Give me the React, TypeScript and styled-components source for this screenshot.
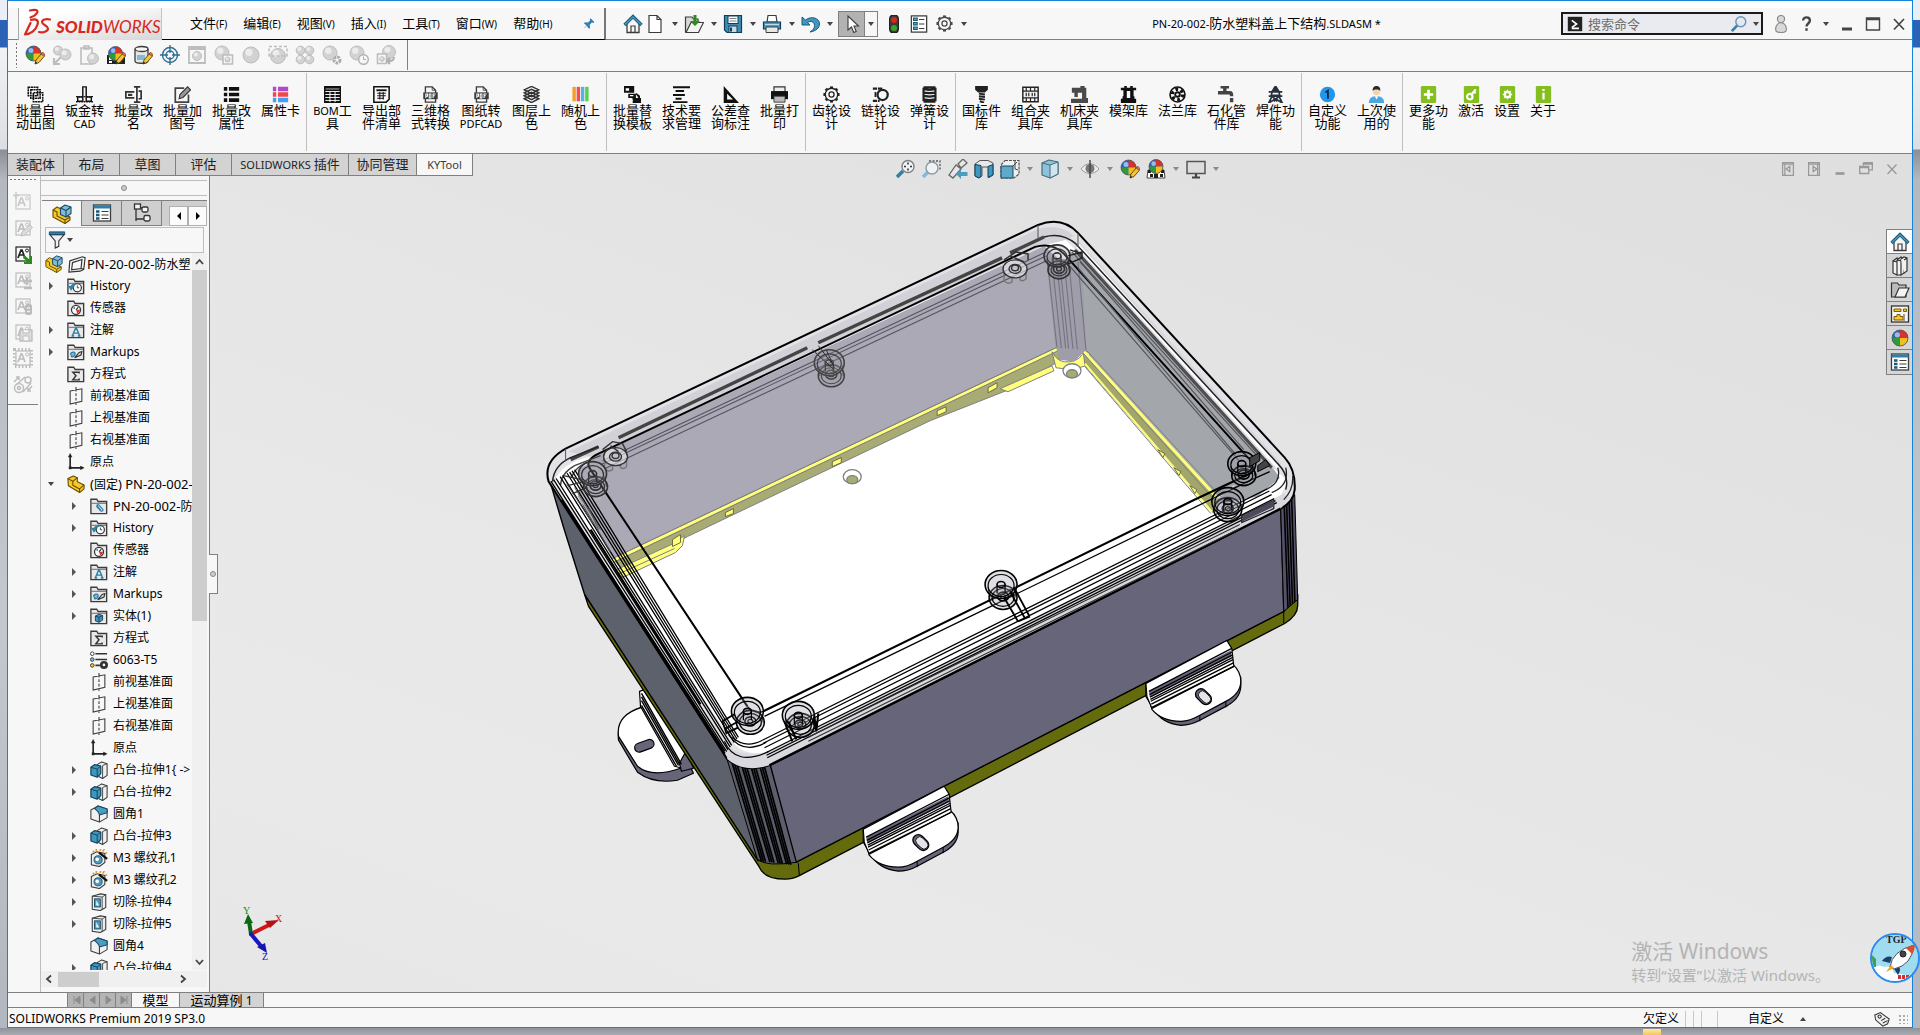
import React, { ReactNode } from 'react';
import styled, { createGlobalStyle } from 'styled-components';

const SANS = '"Noto Sans", "Noto Sans CJK SC", sans-serif';
const GRAY = '#808080';
const PANEL = '#f7f7f7';

const GlobalStyle = createGlobalStyle`
  * { box-sizing: border-box; }
  body { margin: 0; overflow: hidden; }
  button, input { font: inherit; color: inherit; }
  ul { list-style: none; margin: 0; padding: 0; }
`;

/* ---------- shell ---------- */

const Desktop = styled.div`
  height: 100vh;
  padding: 0 7px 7px;
  font-family: ${SANS};
  font-size: 12px;
  line-height: 16px;
  color: #000;
  background:
    linear-gradient(#ffe9a0, #f0c860) 1643px 100% / 18px 6px no-repeat,
    linear-gradient(#8f9299, #a9acb2) 0 100% / 100% 7px no-repeat,
    linear-gradient(#e9eef8 0, #e9eef8 20px, #2b62b5 20px, #2b62b5 47px, #f1f2f4 48px, #dcdee3 149px, #8b8e95 150px, #b4b8c0 180px, #c3c7ce 60%, #b2b6be 100%);
`;
const AppWindow = styled.div`
  height: 100%;
  display: flex;
  flex-direction: column;
  border: 1px solid #1583d8;
  background: #fff;
  padding-top: 7px;
`;

const PlainButton = styled.button`
  border: 0;
  padding: 0;
  margin: 0;
  background: none;
  display: flex;
  align-items: center;
  justify-content: center;
`;
const IconButton = styled(PlainButton)<{ $w?: number; $h?: number }>`
  width: ${p => p.$w ?? 20}px;
  height: ${p => p.$h ?? 20}px;
  flex: none;
`;
const Caret = styled.i<{ $c?: string; $up?: boolean }>`
  border: 3px solid transparent;
  border-${p => (p.$up ? 'bottom' : 'top')}: 4px solid ${p => p.$c ?? '#444'};
  border-${p => (p.$up ? 'top' : 'bottom')}-width: 0;
`;
const Latin = styled.span<{ $s: number }>`
  font-size: ${p => p.$s}px;
`;
function Mixed({ text, size = 11 }: { text: string; size?: number }) {
  return (
    <>
      {text.split(/([\x20-\x7e]+)/).map((t, i) =>
        i % 2 ? <Latin key={i} $s={size}>{t}</Latin> : t
      )}
    </>
  );
}

/* ---------- icons ---------- */

const K = '#3c3c3c';
const B = '#2f7fa6';
const LB = '#7fbcd8';
const LG = '#bdbdbd';

const ball = (cx: number, cy: number, r: number) => (
  <g>
    <circle cx={cx} cy={cy} r={r} fill="#2864c8" />
    <path d={`M${cx} ${cy}V${cy - r}A${r} ${r} 0 0 1 ${cx + r} ${cy}Z`} fill="#d8322c" />
    <path d={`M${cx} ${cy}H${cx - r}A${r} ${r} 0 0 0 ${cx} ${cy + r}Z`} fill="#2e9a3a" />
    <path d={`M${cx} ${cy}V${cy + r}A${r} ${r} 0 0 0 ${cx + r} ${cy}Z`} fill="#f0c020" />
    <circle cx={cx - r / 3} cy={cy - r / 2.5} r={r / 3} fill="#fff" opacity=".55" />
    <circle cx={cx} cy={cy} r={r} fill="none" stroke="#555" strokeWidth=".8" />
  </g>
);
const gball = (cx: number, cy: number, r: number) => (
  <g>
    <circle cx={cx} cy={cy} r={r} fill="#d2d2d2" stroke={LG} />
    <circle cx={cx - r / 4} cy={cy - r / 3} r={r / 2.2} fill="#ececec" />
  </g>
);
const pencil = (
  <g>
    <path d="M10 19l1-4 6-7 3 2.500-6 7z" fill="#f3c63a" stroke="#5a3d10" strokeWidth=".9" />
    <path d="M16 9l1.500-2 2.500 2.500-1.500 1.500z" fill="#e06a5a" stroke="#5a3d10" strokeWidth=".6" />
    <path d="M10 19l.6-2.400 1.600 1.400z" fill="#222" />
  </g>
);
const folder = (
  <path d="M1 18.500v-16h6.500l1.500 2.500h9.500v13.500z" fill="#e9e9e9" stroke={K} strokeWidth="1.500" />
);
const folderFace = <path d="M2 7h16" stroke={K} strokeWidth=".8" />;
const noteBox = (c: string) => (
  <g>
    <rect x="3" y="3" width="14" height="14" fill="none" stroke={c} strokeWidth="1.200" />
    <path d="M5 14l3-8h1l3 8M6 11h5" fill="none" stroke={c} strokeWidth="1.700" />
    <circle cx="14" cy="6.500" r="1.500" fill="none" stroke={c} />
  </g>
);
const green = (c: ReactNode) => (
  <g>
    <rect x="1" y="0" width="18" height="20" rx="1.500" fill="#84bf1f" />
    {c}
  </g>
);
const gearTeeth = (cx: number, cy: number, r: number, n: number, c: string, w: number) => (
  <g stroke={c} strokeWidth={w}>
    {Array.from({ length: n }, (_, i) => {
      const a = (i * 2 * Math.PI) / n;
      return (
        <path key={i} d={`M${cx + Math.cos(a) * (r - 1)} ${cy + Math.sin(a) * (r - 1)}L${cx + Math.cos(a) * (r + 1.5)} ${cy + Math.sin(a) * (r + 1.5)}`} />
      );
    })}
  </g>
);
const gear = (c: string) => (
  <g fill="none" stroke={c}>
    {gearTeeth(10, 10, 8, 8, c, 3.6)}
    <circle cx="10" cy="10" r="7.300" fill={PANEL} strokeWidth="1.600" />
    <circle cx="10" cy="10" r="3" strokeWidth="1.500" />
  </g>
);
const house = (
  <g>
    <path d="M4 9v9.500h12V9l-6-6z" fill="#f6f6f6" stroke={K} strokeWidth="1.300" />
    <path d="M8 18v-6h4v6" fill="none" stroke={K} strokeWidth="1.200" />
    <path d="M1.500 11L10 2.500l8.500 8.500" fill="none" stroke="#1c5a7a" strokeWidth="3.200" />
    <path d="M2 10.500L10 2.800l8 7.700" fill="none" stroke="#4a9cc0" strokeWidth="1.300" />
  </g>
);
const assembly = (
  <g strokeLinejoin="round" strokeWidth="1.100">
    <path d="M1 6l4-3 4 2v4l9 4v3l-5 3.500L1 13z" fill="#f5c928" stroke="#6a4c00" />
    <path d="M1 6l4 2v4l8 4v3.500M13 16l5-3" fill="none" stroke="#6a4c00" />
    <path d="M8.500 4l4.500-3 6 2v6.500L14 13l-5.500-2.500z" fill={LB} stroke="#1c4a64" />
    <path d="M8.500 4L14 6.500V13M14 6.500L19 3" fill="none" stroke="#1c4a64" />
  </g>
);
const part = (
  <g strokeLinejoin="round" stroke="#6a4c00" strokeWidth="1.200">
    <path d="M1 4l6-3 4.500 2v4.500L19 11v4.500L14 19.500 1.500 12z" fill="#f5c928" />
    <path d="M1 4l5.500 3v4.500l7.500 4v4M6.500 7l5-4M14 15.500l5-4.500" fill="none" />
  </g>
);
const props = (
  <g>
    <rect x="1.500" y="2" width="17" height="16" fill="#fff" stroke={K} strokeWidth="1.300" />
    <path d="M1.500 4h17" stroke={B} strokeWidth="3" />
    <path d="M4 8.500h3.500M4 12h3.500M4 15.500h3.500" stroke="#1c5a7a" strokeWidth="2.400" />
    <path d="M9.500 8.500h7M9.500 12h7M9.500 15.500h7" stroke={K} strokeWidth="1.200" />
  </g>
);
const pdf = (
  <g>
    <path d="M4 8V1h8l4 4v14H4v-4" fill="none" stroke={K} strokeWidth="1.600" />
    <path d="M12 1v4h4" fill="none" stroke={K} />
    <rect x="1.500" y="7.500" width="17" height="8" fill={K} />
    <path d="M4.500 14v-4.500h2V12h-2M8.500 9.500V14h2V9.500zM13 14V9.500h3M13 11.500h2" fill="none" stroke="#fff" strokeWidth="1.200" />
  </g>
);
const extrude = (
  <g strokeLinejoin="round">
    <path d="M8 4l5-3 6 2v13l-5 3.500-4-2z" fill="#f1f1f1" stroke={K} strokeWidth="1.200" />
    <path d="M14 5v14M14 5l5-2" stroke={K} fill="none" />
    <path d="M1 7l4-3 7 1.500V14l-4 4-7-2.500z" fill="#3f97bd" stroke="#123f58" strokeWidth="1.300" />
    <path d="M1 7l7 2v9M8 9l4-3.500" stroke="#123f58" fill="none" />
  </g>
);
const fillet = (
  <g strokeLinejoin="round" strokeWidth="1.200">
    <path d="M1 5.500L9 1l10 3.500V14l-8.500 5L1 15.500z" fill="#f1f1f1" stroke={K} />
    <path d="M9 1l10 3.500V8.500l-8.500 2.500C10 8 8 6 5 4z" fill="#4a9cc0" stroke="#1c4a64" />
    <path d="M10.500 11v8" stroke={K} />
  </g>
);
const cut = (
  <g>
    <path d="M2.500 3.500l9-2.500 6 1v14l-6 3.500-9-1.500z" fill="#eee" stroke={K} strokeWidth="1.200" />
    <path d="M2.500 3.500l11 1V18.500M13.500 4.500l4-2.500" fill="none" stroke={K} />
    <rect x="5" y="6.500" width="6.500" height="9" fill="#4a9cc0" stroke="#1c4a64" />
    <path d="M7 8v6h3z" fill="#fff" />
  </g>
);
const hole = (
  <g>
    <path d="M1.500 6l6-3 9 2v10l-6 4.500-9-2z" fill="#eee" stroke={K} strokeWidth="1.200" />
    <circle cx="9" cy="12" r="4.500" fill="#4a9cc0" stroke="#1c4a64" />
    <circle cx="8" cy="11.500" r="2" fill="#fff" />
    <path d="M10 4l9 7" stroke="#111" strokeWidth="2.600" />
    <path d="M3 2l2 2M7 0v3M12 0l-1 2M16 0l-2 3M19 4l-2 1" stroke="#e3962a" strokeWidth="1.700" />
  </g>
);
const plane = (
  <path d="M3.500 4.500L16.500 2v14L3.500 19zM10 0v5m0 2v3m0 2v3m0 2v3" fill="none" stroke={K} strokeWidth="1.200" />
);
const origin = (
  <g fill="none" stroke="#222" strokeWidth="1.800">
    <path d="M3.500 3v13.500H17" />
    <path d="M1.500 4.500l2-4 2 4zM15 14.500l4 2-4 2z" fill="#222" strokeWidth=".5" />
    <rect x="2" y="15" width="3" height="3" fill="#222" stroke="none" />
  </g>
);

const ICONS: Record<string, ReactNode> = {
  house,
  assembly,
  part,
  props,
  pdf,
  extrude,
  fillet,
  cut,
  hole,
  plane,
  origin,
  gear: gear('#4a4a4a'),
  gearBlack: gear('#222'),
  pin: <path d="M3 17l5-5-4-3 2-1.500 4 .5 3-3-.5-2.500L14 2l5 5-1 1.500-2.500-.5-3 3 .5 4-1.500 2-3-4z" fill="#2f7fb5" />,
  fileNew: <path d="M4 1.500h8l4 4v13H4zM12 1.500v4h4" fill="#fff" stroke={K} strokeWidth="1.200" />,
  fileOpen: (
    <g>
      <path d="M1.500 3H8l1.500 2H14v13H1.500z" fill="#d8d8d8" stroke={K} strokeWidth="1.200" />
      <path d="M2 18.500l5-10h12.500l-5 10z" fill="#f4f4f4" stroke={K} strokeWidth="1.200" />
      <path d="M9.500 1h3v6h3.500L11 12 6 7h3.500z" fill="#2c8a1e" />
    </g>
  ),
  save: (
    <g>
      <path d="M1.500 1.500h17v17H4l-2.500-2.500z" fill="#3d8db3" stroke="#123f58" strokeWidth="1.200" />
      <rect x="5" y="2" width="10" height="7.500" fill="#fff" stroke="#123f58" />
      <path d="M6.500 4.500h7M6.500 7h7" stroke={GRAY} />
      <rect x="6" y="12" width="8" height="6.500" fill="#c9dbe4" stroke="#123f58" />
      <path d="M8 13.500v4" stroke="#123f58" strokeWidth="2" />
    </g>
  ),
  print: (
    <g>
      <path d="M5 8l1-6.500h8L15 8z" fill="#fff" stroke={K} strokeWidth="1.200" />
      <path d="M1.500 8h17v7h-17z" fill="#4a9cc0" stroke="#123f58" strokeWidth="1.200" />
      <path d="M4 13h12v5.500H4z" fill="#e8e8e8" stroke={K} />
      <path d="M3 10.500h14" stroke="#bde0ef" />
    </g>
  ),
  undo: <path d="M1 3v8h8L6.500 8.500c3-2 7-1 7 3 0 3-1.500 4.500-4.500 6.500 6-1 9.500-4 9.500-8 0-6-8-8.500-14-4z" fill="#3f97bd" stroke="#1c5a7a" />,
  cursor: <path d="M6 2v14l3.500-3 2.300 5.500 2.400-1L12 12h4.500z" fill="#fff" stroke={K} strokeWidth="1.100" />,
  traffic: (
    <g>
      <rect x="5" y="0" width="10" height="20" rx="4" fill="#3a3a3a" stroke="#111" />
      <circle cx="10" cy="5.500" r="3.300" fill="#d8281e" />
      <circle cx="10" cy="14.500" r="3.300" fill="#3aa32a" />
    </g>
  ),
  list: (
    <g>
      <rect x="1.500" y="1" width="17" height="18" fill="#fff" stroke={K} strokeWidth="1.400" />
      <path d="M4 3.500h4V6H4zM4 8.500h4V11H4zM4 13.500h4V16H4z" fill={LB} stroke="#1c5a7a" strokeWidth="1.300" />
      <path d="M10 5h6M10 10h6M10 15h6" stroke={K} strokeWidth="1.300" />
    </g>
  ),
  prompt: (
    <g>
      <rect x="1" y="1" width="18" height="18" fill="#222" />
      <path d="M6 5.500l6 4.500-6 4.500M6 15.500h9" fill="none" stroke="#fff" strokeWidth="2" />
    </g>
  ),
  search: (
    <g fill="none">
      <path d="M2 18l6-6.500" stroke="#3f7fa8" strokeWidth="3" />
      <circle cx="12" cy="7.500" r="5.500" fill="#dfeaf4" stroke="#6f93b4" strokeWidth="1.600" />
    </g>
  ),
  user: (
    <g fill="#d9d9d9" stroke="#8a8a8a" strokeWidth="1.300">
      <circle cx="10" cy="4.500" r="4" />
      <path d="M4.500 18c-1.500-5 1.500-9.500 5.500-9.500S17 13 15.500 18c-2 2-9 2-11 0z" />
    </g>
  ),
  help: <path d="M6 6.500C6 1.500 14 1.500 14 6.500c0 3.500-4 3.500-4 7M10 15.500v3" fill="none" stroke="#444" strokeWidth="2.800" />,
  min: <path d="M5 15h10" stroke="#444" strokeWidth="3" />,
  max: <path d="M3.500 4h13v12h-13zM3.500 5.500h13" fill="none" stroke="#444" strokeWidth="1.400" />,
  close: <path d="M5 5l10 10.500M15 5L5 15.500" stroke="#444" strokeWidth="1.700" />,
  /* render toolbar */
  ballPencil: <g>{ball(8.5, 8.5, 7.5)}{pencil}</g>,
  gCopy: <g>{gball(6, 5.500, 4.5)}{gball(13.5, 9.5, 5.5)}<path d="M2 19l7-7M2 13v6h6" fill="none" stroke={LG} strokeWidth="2.200" /></g>,
  gPaste: <g><path d="M2 3h11v16H2zM5 1h5v3H5z" fill="none" stroke={LG} strokeWidth="1.600" />{gball(14, 13.5, 5.5)}</g>,
  sceneEdit: (
    <g>
      <path d="M1 19v-9h18v9z" fill="#222" /><path d="M3 12h3v3H3zM3 16h3v2H3zM14 12h3v3h-3z" fill="#fff" />
      {ball(9.5, 8.5, 7)}{pencil}
    </g>
  ),
  dbEdit: (
    <g>
      <path d="M2 4v12c0 3 13 3 13 0V4" fill="#e6e6e6" stroke={K} strokeWidth="1.300" />
      <ellipse cx="8.500" cy="4" rx="6.500" ry="2.500" fill="#f6f6f6" stroke={K} strokeWidth="1.300" />
      <path d="M4 10h8v5H4z" fill={LB} />{pencil}
    </g>
  ),
  target: (
    <g fill="none" stroke="#2f6f92" strokeWidth="1.400">
      <circle cx="10" cy="10" r="7.500" /><circle cx="10" cy="10" r="4" /><path d="M10 0v8m0 4v8M0 10h8m4 0h8" />
    </g>
  ),
  gWin: <g><path d="M2 2h16v16H2zM2 4h16" fill="none" stroke={LG} strokeWidth="1.800" />{gball(10, 11, 4.5)}</g>,
  gBallWin: <g>{gball(8, 8, 7)}<path d="M9 10h9.500v9H9z" fill={PANEL} stroke={LG} strokeWidth="1.600" />{gball(13.5, 14.5, 2.5)}</g>,
  gBall: gball(10, 10, 8),
  gBallDash: <g>{gball(10, 11, 7.5)}<path d="M1 1.500h18V11H1z" fill="none" stroke={LG} strokeWidth="1.500" strokeDasharray="3 2" /></g>,
  gFour: <g>{gball(5.5, 5.5, 4.3)}{gball(14.5, 5.5, 4.3)}{gball(5.5, 14.5, 4.3)}{gball(14.5, 14.5, 4.3)}</g>,
  gGear: <g>{gball(8, 8, 7)}<circle cx="15" cy="15" r="3" fill="none" stroke="#aaa" strokeWidth="3" strokeDasharray="2.500 1" /></g>,
  gClock: <g>{gball(8, 8, 7)}<circle cx="14.500" cy="14.500" r="4.800" fill={PANEL} stroke="#b0b0b0" strokeWidth="1.400" /><path d="M14.500 11.500v3h2.500" fill="none" stroke="#b0b0b0" /></g>,
  gRecall: <g>{gball(13, 7, 6.5)}<path d="M1.500 9h9v9.500h-9z" fill={PANEL} stroke={LG} strokeWidth="1.600" />{gball(6, 14, 2.3)}<path d="M18 12c0 4-3 4-6 4M14 13l-3 3 3 3" stroke="#b0b0b0" strokeWidth="2" fill="none" /></g>,
  /* ribbon */
  copies: <g fill={PANEL} stroke="#111" strokeWidth="1.800" strokeDasharray="2.500 .6"><path d="M1.500 1.500h11v10h-11zM4.500 4.500h11v10h-11zM7.500 8h11v10.500h-11z" /></g>,
  sheet: <g fill="none" stroke="#111" strokeWidth="1.700"><path d="M8 12V1h4v11M2 18v-5h6v5zM12 13h6v5h-6z" /><path d="M0 12.500h20M0 18.500h20" strokeDasharray="2 1" /></g>,
  rename: <g fill="none" stroke="#333" strokeWidth="2"><path d="M11 7H1v7h10" /><path d="M3.500 10.500h5" strokeWidth="2.600" /><path d="M10.500 1h3l.5 1.500.5-1.500H18M10.500 19h3l.5-1.500.5 1.500H18M14 2v16M16 6h3v9h-3" /></g>,
  edit: <g fill="none" stroke="#444" strokeWidth="2"><path d="M12 2.500H1.500V19H17v-9" /><path d="M6 15l1-5 9-9 3.500 3.500-9 9z" fill="#999" stroke="#333" strokeWidth="1.300" /></g>,
  listBlack: <path d="M1 3.500h4M7 3.500h12M1 10h4M7 10h12M1 16.500h4M7 16.500h12" stroke="#111" strokeWidth="4.400" />,
  listColor: (
    <g strokeWidth="5.400">
      <path d="M1 3.500h4M7 3.500h12" stroke="#b04ac8" /><path d="M1 10h4M7 10h12" stroke="#f04848" /><path d="M1 16.500h4M7 16.500h12" stroke="#3fa0f4" />
    </g>
  ),
  bom: <g><path d="M0 0h20v20H0z" fill="#111" /><path d="M1.500 6.500h17M1.500 10h17M1.500 13.500h17M1.500 17h17M7 7v12M13 7v12" stroke="#fff" strokeWidth="1.100" /><path d="M2 3.500h16" stroke="#fff" strokeWidth=".8" /></g>,
  tableOut: <g fill="none" stroke="#111" strokeWidth="1.800"><path d="M1 1h18v14.500L15.500 19H1z" /><path d="M4 5h12" strokeWidth="2.200" /><path d="M5 8.500h10M5 11.500h10M5 14.500h8M8 7v9M12 7v9" strokeWidth="1.200" /></g>,
  layers: <g fill={PANEL} stroke="#333" strokeWidth="1.700"><path d="M1.500 15L10 11l8.500 4-8.500 4.500zM1.500 11.500L10 7.500l8.500 4L10 16zM1.500 8L10 4l8.500 4-8.500 4.500zM1.500 4.500L10 .5l8.500 4L10 9z" /></g>,
  crayons: (
    <g strokeWidth="4">
      <path d="M2.500 1v17" stroke="#f0a028" /><path d="M7.500 1v17" stroke="#f05048" /><path d="M12.500 1v17" stroke="#58b0e8" /><path d="M17.500 1v17" stroke="#58d048" />
    </g>
  ),
  replace: <g fill="#111"><path d="M0 0h12v8H0zM5 9h9v5H5z" /><path d="M2 2.500h4v3H2zM7 10.500h4V12H7z" fill="#fff" /><path d="M10 15h10v5h-9v-3M14 9l4 3v4" stroke="#111" strokeWidth="1.600" /></g>,
  lines: <path d="M0 1.500h20M3 6h10M0 10.500h14M3 15h7M0 19h17" stroke="#111" strokeWidth="2.300" />,
  triangle: <path d="M2 0v20h18zM6 9v7h7z" fill="#111" fillRule="evenodd" />,
  printer: <g><path d="M3.500 1h13v6h-13z" fill="#eee" stroke="#333" strokeWidth="1.400" /><path d="M0 6h20v9.500H0z" fill="#111" /><path d="M3.500 12h13v7h-13z" fill="#bbb" stroke="#333" /></g>,
  chain: <g fill="none" stroke="#222" strokeWidth="2.600"><path d="M1 3h12M1 17.500h8" strokeDasharray="5 1" /><circle cx="12.500" cy="10.500" r="6" /><path d="M4 7v6" strokeWidth="2" /></g>,
  spring: <g fill="none" stroke="#222" strokeWidth="2.600"><path d="M2 3c4 2 12 2 16 0M2 7c4 2 12 2 16 0M2 11c4 2 12 2 16 0M2 15c4 2 12 2 16 0M3 18.500h14M3 1.500h14M3 2v16M17 2v16" /></g>,
  bolt: <g fill="#222"><path d="M2.500 0h15v4.500l-3.500 3H6l-3.500-3z" /><path d="M7 9l7 1M7 12l7 1M7 15l7 1M8 18l5 1.500" stroke="#222" strokeWidth="2.300" /></g>,
  fixture: <g fill="none" stroke="#222" strokeWidth="1.700"><path d="M1 1.500h18v17H1z" /><path d="M1 6h18M1 14h18" /><path d="M5 2v4M10 2v4M15 2v4M5 14v4M10 14v4M15 14v4M5 8v4M8 8v4M12 8v4M15 8v4" strokeWidth="1.400" /></g>,
  machine: <path d="M1 2h10V0h5v2h2v12h2v6H0v-5h13V8H8v5H4V8H1z" fill="#4a4a4a" />,
  mold: <path d="M1 2h4V0h3v2h4V0h3v2h4v3h-3v7h1v3h2v5H1v-5h2v-3h1V5H1zM8 6v8h4V6z" fill="#111" fillRule="evenodd" />,
  flange: (
    <g fill="none" stroke="#111">
      <circle cx="10" cy="10" r="8.800" strokeWidth="1.900" /><circle cx="10" cy="10" r="2.700" strokeWidth="2.200" />
      <circle cx="10" cy="10" r="6" strokeWidth="4" strokeDasharray="3.200 3.080" />
    </g>
  ),
  tap: <path d="M3 0h10v3h-3v3h4c3 0 4 2 4 6h-4c0-2 0-2-2-2H0V6h6V3H3zM14 14h4v5h-4z" fill="#444" />,
  tower: <path d="M10 0L7 5h6l-3-5v5M2 7h16M4 7h2l-1 4h10l-1-4M2 12h16M6 12L2 20l8-5 8 5-4-8M6 12l6 6M14 12l-6 6" fill="none" stroke="#27303c" strokeWidth="2" />,
  one: <g><circle cx="10" cy="10" r="9" fill="#1f97ee" /><path d="M7.500 7.500L10.500 5.500V15" fill="none" stroke="#123" strokeWidth="2" /></g>,
  person: (
    <g>
      <path d="M1 20c0-7 5-8 9-8s9 1 9 8z" fill="#4aa8e0" /><path d="M8 12h4l-2 4z" fill="#fff" />
      <circle cx="10" cy="6.500" r="4.300" fill="#f6d3a8" /><path d="M5.500 5.500c-1-7.500 10-7.500 9 0-2-2-7-2-9 0z" fill="#2a2a2a" />
    </g>
  ),
  gPlus: green(<path d="M10 4.500v11M4.500 10h11" stroke="#fff" strokeWidth="3.200" />),
  gKey: green(<g fill="none" stroke="#fff" strokeWidth="2.600"><circle cx="8" cy="12.500" r="3.200" /><path d="M10 10l5-6M12.500 6.500l2.500 2" /></g>),
  gSet: green(<g>{gearTeeth(10, 10, 4, 8, '#fff', 2)}<circle cx="10" cy="10" r="3" fill="none" stroke="#fff" strokeWidth="2.400" /></g>),
  gInfo: green(<path d="M10 8v8M10 3.500v2.500" stroke="#fff" strokeWidth="2.600" />),
  /* view toolbar */
  zoomFit: <g><path d="M1 18l6-6" stroke={B} strokeWidth="3.500" /><circle cx="12" cy="7.500" r="6" fill="#eef3f6" stroke={GRAY} strokeWidth="1.400" /><path d="M12 3.500v2M12 9.500v2M8 7.500h2M14 7.500h2" stroke="#333" strokeWidth="1.600" /></g>,
  zoomArea: <g><path d="M7 2h11v10" fill="none" stroke="#555" strokeDasharray="2 1.500" strokeWidth="1.300" /><path d="M1 18l5-5" stroke={LB} strokeWidth="3.500" /><circle cx="10" cy="9" r="6" fill="#eef3f6" stroke="#8a9aa5" strokeWidth="1.400" /></g>,
  prevView: <g><path d="M1 16l7-10 5 4-8 9zM10 5l5-5 4 4-6 5z" fill="#e8e8e8" stroke="#666" strokeWidth="1.300" /><path d="M8 15l5-5v3h6.500v4H13v3z" fill="#4a9cc0" /></g>,
  section: <g><path d="M1 5l5-3.500h8l5 2.500v12l-4 2.500V8H8v9l-3 2-4-2z" fill="#e8e8e8" stroke="#555" /><path d="M1 5.500l6 1V17l-2 2-4-2zM14 7.500l5-2V16l-5 2.500z" fill="#3f97bd" stroke="#123f58" /></g>,
  cubeView: <g><path d="M5 1.500h14V15l-5 4H1V6z" fill="#f0f0f0" stroke="#555" strokeWidth="1.200" strokeDasharray="3 1" /><path d="M1 7h12v12H1z" fill="#5fa9ca" stroke="#1c4a64" /><path d="M13 7l4-4M15 2v8l3 1" fill="none" stroke="#444" /></g>,
  cube: <g strokeLinejoin="round"><path d="M2 4l7-3 9 2v12l-8 4-8-3z" fill="#8cc3dc" stroke="#4a6a7a" strokeWidth="1.200" /><path d="M2 4l8 2v13l8-4V3l-8 3" fill="#cfe5ef" stroke="#4a6a7a" /></g>,
  eye: <g><path d="M1 10c5-7 13-7 18 0-5 6-13 6-18 0z" fill="#eee" stroke="#999" /><circle cx="10" cy="9.500" r="4.500" fill="#777" /><path d="M10 1v18" stroke="#444" strokeWidth="1.400" /></g>,
  scene: <g><path d="M1 19l1-8h16l1 8z" fill="#fff" stroke="#444" /><path d="M2 11h3v3H2zM8 15h4v4H8zM15 11h3v3h-3zM4 15h3v3H4zM14 15h3v3h-3z" fill="#222" />{ball(10, 7.500, 7)}</g>,
  monitor: <g><path d="M1 2.500h18v12H1z" fill="#dcdcdc" stroke="#555" strokeWidth="1.500" /><path d="M10 15v3M6 18.500h8" stroke="#444" strokeWidth="2.200" /></g>,
  dockL: <path d="M4 3h12v14H4zM4 4.500h12M12 7v6L8 10zM6.500 5v12" fill="none" stroke="#999" strokeWidth="1.400" />,
  dockR: <path d="M4 3h12v14H4zM4 4.500h12M9 7v6l4-3zM14 5v12" fill="none" stroke="#999" strokeWidth="1.400" />,
  minG: <path d="M5 15h10" stroke="#999" strokeWidth="3" />,
  restoreG: <path d="M7 3h10v8h-4M7 6V3M3 7h10v8H3zM3 8.500h10M7 4.500h10" fill="none" stroke="#999" strokeWidth="1.500" />,
  closeG: <path d="M5 5l10 10.500M15 5L5 15.500" stroke="#999" strokeWidth="1.500" />,
  /* annotation column */
  nNew: <g opacity=".8">{noteBox(LG)}<path d="M3 0v7M0 3.500h6" stroke={LG} strokeWidth="1.300" /></g>,
  nEdit: <g>{noteBox(LG)}<path d="M8 18l1-4 8-7 2.500 2.500-8 7.500z" fill="#ddd" stroke={LG} /></g>,
  nInsert: <g>{noteBox('#222')}<path d="M11 11l6 5V12h2v8h-8v-2h4l-5-4z" fill="#2c8a1e" /></g>,
  nAdd: <g>{noteBox(LG)}<path d="M14 7v8M10 11h9M11 18h8" stroke={LG} strokeWidth="2.600" /></g>,
  nLight: <g>{noteBox(LG)}<rect x="12" y="8" width="7" height="11" rx="2.500" fill="#bbb" /><path d="M14 12h3M14 15.500h3" stroke="#eee" strokeWidth="1.600" /></g>,
  nSave: <g>{noteBox(LG)}<path d="M7 8h12v11H7z" fill="#ddd" stroke={LG} strokeWidth="1.300" /><path d="M10 14h6v5h-6zM10 8v3h6V8" fill="#f4f4f4" stroke={LG} /></g>,
  nAll: <g>{noteBox(LG)}<rect x="1.500" y="1.500" width="17" height="17" fill="none" stroke={LG} strokeWidth="3" strokeDasharray="1.500 2" /></g>,
  nBelt: <g fill="none" stroke={LG} strokeWidth="1.500"><circle cx="6" cy="14" r="4.500" /><circle cx="6" cy="14" r="1.500" /><circle cx="15" cy="6" r="3" /><path d="M3 11l9-8M10 18l8-9M1 8l5-5m0 3V3H3M19 12l-4 5m0-3v3h3" /></g>,
  /* tree */
  note: <path d="M2 6.500L16 2l3 1-1.500 13-4 2L1 19zM5 8.500L15.500 5l-1 10L4 16.500zM14.500 15l3 1" fill="none" stroke="#333" strokeWidth="1.300" />,
  fHistory: <g>{folder}{folderFace}<circle cx="11.500" cy="12" r="4.500" fill="#fff" stroke="#333" strokeWidth="1.300" /><path d="M11.500 9.500V12h2" fill="none" stroke="#333" /><path d="M4 12a5 5 0 0 1 6-4M2.500 10.500l2 3.500 2.500-3z" fill={B} stroke={B} strokeWidth="1.500" /></g>,
  fSensor: <g>{folder}<circle cx="10" cy="12" r="5" fill="#fff" stroke="#333" strokeWidth="1.400" /><path d="M10 12l2.500-3" stroke="#333" strokeWidth="1.300" /><path d="M10 12l4.500 0a4.500 4.500 0 0 1-3 4z" fill="#d8322c" /><circle cx="8" cy="10" r="1" fill={B} /></g>,
  fNote: <g>{folder}{folderFace}<path d="M6 16.500L9.500 8h1l3.500 8.500M7.500 13.500H12M5 16.700h3M12 16.700h3" fill="none" stroke={B} strokeWidth="1.600" /></g>,
  fMarkup: <g>{folder}{folderFace}<path d="M4 13c0-3 5-4 5-1s-3 4-4 3 1-1 1-1" fill={LB} stroke={B} strokeWidth="1.500" /><path d="M8.500 16.500l5-6 3-1-1 4-5 2z" fill="#ddd" stroke="#333" strokeWidth="1.300" /></g>,
  fSigma: <g>{folder}<path d="M13.500 9.500V8H6.500l3.500 4-3.500 4.500h7V15" fill="none" stroke="#333" strokeWidth="1.600" /></g>,
  fClip: <g>{folder}{folderFace}<path d="M7 10l5 5.500c2 1 3-1 2-2l-4-4.500c-1-1-3 0-2 1l4 4.500" fill="none" stroke={B} strokeWidth="1.300" /></g>,
  fBody: <g>{folder}{folderFace}<path d="M6 10l4-2 4 1.500v5L10 17l-4-1.500z" fill="#3f97bd" stroke="#123f58" /><path d="M6 10l4 1.500V17M10 11.500l4-2" stroke="#123f58" fill="none" /></g>,
  material: (
    <g stroke="#333">
      <circle cx="2.500" cy="3" r="2" fill="#fff" /><circle cx="2.500" cy="9.500" r="2" fill={LB} /><circle cx="2.500" cy="16" r="2" fill="#f5c928" />
      <path d="M6 3h13M6 9.500h13M6 16h5" strokeWidth="1.800" /><circle cx="15.500" cy="15.500" r="3" fill="none" strokeWidth="3" />
    </g>
  ),
  config: <g fill="#f6f6f6" stroke="#333" strokeWidth="1.300"><path d="M4 2v16M4 5h8M4 16h8" /><rect x="2.500" y="1" width="6" height="5" /><rect x="10" y="4" width="6" height="5" rx="1.500" /><rect x="12" y="12.500" width="6" height="5.500" rx="1.500" /></g>,
  filter: <g><path d="M2 4l6 7v8l4-2v-6l6-7z" fill="#f0f0f0" stroke="#333" strokeWidth="1.200" /><path d="M1.500 1h17v3h-17z" fill={B} stroke="#1c4a64" /></g>,
  /* task pane */
  books: <g fill="#f2f2f2" stroke="#333" strokeWidth="1.200"><path d="M3 5l4 1v13l-4-2zM7 4l4 1v14l-4 0zM11 3l3 1v13l-3 2z" /><path d="M3 5l4-3 2 1M7 4l4-3 2 1M11 3l3-2 3 1v13l-3 2M14 4l3-2" /></g>,
  openFolder: <g stroke="#333" strokeWidth="1.200"><path d="M1.500 3h6l1.500 2h7v12h-14.500z" fill="#bbb" /><path d="M5 17l4-9h10l-4 9z" fill="#f4f4f4" /></g>,
  palette: <g><rect x="1.500" y="2" width="17" height="16" fill="#f6f6f6" stroke="#333" strokeWidth="1.300" /><path d="M4 5h7v2.500H4zM13.500 5h3v2.500h-3zM4 12.500h3v-2h3v2h3V16H4z" fill="#f5c928" stroke="#7a5a00" /><path d="M14 10v7.500" stroke="#888" strokeWidth="1.600" /></g>,
  colorBall: ball(10, 10, 8),
  tag: <g fill="#f0f0f0" stroke="#333" strokeWidth="1.300"><path d="M1 5l7-3 11 8-2 6-6 3-9-8z" /><circle cx="7" cy="7" r="2" /><path d="M9 12l5-3M11 15l6-3" /></g>,
};
const Svg = styled.svg`
  display: block;
  flex: none;
`;
function Icon({ name, size = 20 }: { name: string; size?: number }) {
  return <Svg width={size} height={size} viewBox="0 0 20 20" aria-hidden="true">{ICONS[name]}</Svg>;
}

/* ---------- title bar ---------- */

const TitleBar = styled.header`
  flex: none;
  height: 32px;
  display: flex;
  align-items: stretch;
  background: ${PANEL};
  border-bottom: 1px solid ${GRAY};
`;
const Logo = styled.div`
  width: 144px;
  margin: 0 0 -1px 10px;
  border-left: 1px solid #a8a8a8;
  border-right: 1px solid #c4c4c4;
  background: linear-gradient(170deg, #fff 20%, #f2f2f2 50%, #d6d6d6);
`;
const MenuBar = styled.nav`
  width: 444px;
  margin-bottom: -1px;
  display: flex;
  align-items: center;
  gap: 16px;
  padding-left: 28px;
  border-bottom: 1px solid #000;
  border-right: 2px solid #777;
`;
const MenuItem = styled(PlainButton)`
  font-size: 13px;
  line-height: 20px;
  white-space: nowrap;
  align-items: baseline;
`;
const PinSlot = styled.span`
  margin-left: 12px;
`;
const QuickBar = styled.div`
  display: flex;
  align-items: center;
  padding-left: 14px;
`;
const CursorBox = styled.div`
  display: flex;
  height: 26px;
  border: 1px solid ${GRAY};
  margin-right: 4px;
`;
const CursorMain = styled(PlainButton)`
  width: 26px;
  background: #b2b2b2;
  border-right: 1px solid ${GRAY};
`;
const DocTitle = styled.h1`
  flex: 1;
  margin: 0;
  font-size: 13px;
  font-weight: 400;
  line-height: 31px;
  text-align: center;
  white-space: nowrap;
`;
const SearchBox = styled.label`
  align-self: center;
  width: 202px;
  height: 23px;
  display: flex;
  align-items: center;
  gap: 5px;
  padding: 0 2px 0 4px;
  border: 2px solid #1a1a1a;
  background: #e9ebf0;
  margin-right: 5px;
`;
const SearchInput = styled.input`
  flex: 1;
  min-width: 0;
  border: 0;
  padding: 0;
  background: none;
  font-size: 13px;
  line-height: 18px;
  outline: none;
  &::placeholder { color: #6e6e6e; opacity: 1; }
`;
const WindowButtons = styled.div`
  display: flex;
  align-items: center;
`;

const QUICK = [
  ['fileNew', '新建', 19],
  ['fileOpen', '打开', 19],
  ['save', '保存', 19],
  ['print', '打印', 19],
  ['undo', '撤销', 17],
] as const;

function Header() {
  return (
    <TitleBar>
      <Logo>
        <svg width="142" height="32" viewBox="0 0 142 32" role="img" aria-label="SOLIDWORKS">
          <g fill="none" stroke="#d8281e" strokeLinecap="round" strokeLinejoin="round" strokeWidth="2.200">
            <path d="M11 2.500c5-1.500 9-.5 7 2.500-1.500 2.500-4 3.500-6.500 4.500" />
            <path d="M12 12c5-1.500 8 0 6.500 4.500C17 22 12 26 6 26.500L11.500 15" />
            <path d="M31 11.500c-4-1-8 0-8 2.500 0 3 6 3.500 6 6.500 0 3-5 4.500-9 3.500" />
          </g>
          <text x="37" y="25" fill="#d8281e" fontFamily="Lato, sans-serif" fontSize="17" fontStyle="italic">
            <tspan fontWeight="900">SOLID</tspan>
            <tspan>WORKS</tspan>
          </text>
        </svg>
      </Logo>
      <MenuBar>
        {['文件(F)', '编辑(E)', '视图(V)', '插入(I)', '工具(T)', '窗口(W)', '帮助(H)'].map(m => (
          <MenuItem key={m}><span><Mixed text={m} size={10} /></span></MenuItem>
        ))}
        <PinSlot><Icon name="pin" size={14} /></PinSlot>
      </MenuBar>
      <QuickBar>
        <IconButton $w={25} aria-label="主页"><Icon name="house" /></IconButton>
        {QUICK.map(([n, label, w]) => (
          <React.Fragment key={n}>
            <IconButton aria-label={label}><Icon name={n} /></IconButton>
            <IconButton $w={w} aria-label={`${label}选项`}><Caret /></IconButton>
          </React.Fragment>
        ))}
        <CursorBox>
          <CursorMain aria-label="选择"><Icon name="cursor" /></CursorMain>
          <IconButton $w={12} $h={24} aria-label="选择选项"><Caret /></IconButton>
        </CursorBox>
        <IconButton $w={24} aria-label="重建模型"><Icon name="traffic" size={18} /></IconButton>
        <IconButton $w={26} aria-label="文件属性"><Icon name="list" size={18} /></IconButton>
        <IconButton $w={24} aria-label="选项"><Icon name="gear" size={17} /></IconButton>
        <IconButton $w={16} aria-label="更多选项"><Caret /></IconButton>
      </QuickBar>
      <DocTitle><Mixed text="PN-20-002-防水塑料盖上下结构.SLDASM *" /></DocTitle>
      <SearchBox>
        <Icon name="prompt" size={16} />
        <SearchInput placeholder="搜索命令" aria-label="搜索命令" />
        <Icon name="search" size={18} />
        <Caret />
      </SearchBox>
      <WindowButtons>
        <IconButton $w={26} aria-label="登录"><Icon name="user" size={18} /></IconButton>
        <IconButton $w={24} aria-label="帮助"><Icon name="help" size={17} /></IconButton>
        <IconButton $w={16} aria-label="帮助选项"><Caret /></IconButton>
        <IconButton $w={26} aria-label="最小化"><Icon name="min" /></IconButton>
        <IconButton $w={26} aria-label="最大化"><Icon name="max" /></IconButton>
        <IconButton $w={26} aria-label="关闭"><Icon name="close" /></IconButton>
      </WindowButtons>
    </TitleBar>
  );
}

/* ---------- render toolbar and ribbon ---------- */

const ToolStrip = styled.div`
  flex: none;
  height: 32px;
  background: ${PANEL};
  border-bottom: 1px solid ${GRAY};
`;
const RenderTools = styled.div`
  width: 400px;
  height: 30px;
  display: flex;
  align-items: center;
  gap: 7px;
  padding-left: 7px;
  border-right: 1px solid ${GRAY};
`;
const Grip = styled.i<{ $row?: boolean }>`
  flex: none;
  width: ${p => (p.$row ? '28px' : '3px')};
  height: ${p => (p.$row ? '3px' : '26px')};
  background: radial-gradient(circle, #777 1px, transparent 1px) 0 0 / ${p => (p.$row ? '4px 3px' : '3px 4px')};
`;
const RENDER: [string, string][] = [
  ['ballPencil', '编辑外观'], ['gCopy', '复制外观'], ['gPaste', '粘贴外观'], ['sceneEdit', '编辑布景'], ['dbEdit', '编辑贴图'],
  ['target', '目标'], ['gWin', '预览窗口'], ['gBallWin', '整合预览'], ['gBall', '最终渲染'], ['gBallDash', '渲染区域'],
  ['gFour', '多重渲染'], ['gGear', '渲染选项'], ['gClock', '排定渲染'], ['gRecall', '召回上次渲染'],
];

const Ribbon = styled.div`
  flex: none;
  height: 82px;
  display: flex;
  padding: 1px 0 2px 2px;
  background: ${PANEL};
  border-bottom: 1px solid ${GRAY};
`;
const RibbonGroup = styled.div`
  display: flex;
  padding: 0 1px;
  &:not(:last-child) { border-right: 1px solid #bfbfbf; }
`;
const RibbonItem = styled(PlainButton)<{ $w: number }>`
  width: ${p => p.$w}px;
  flex-direction: column;
  justify-content: flex-start;
  gap: 1px;
  padding-top: 13px;
  font-size: 13px;
  line-height: 13px;
`;
const RibbonLabel = styled.span`
  white-space: pre;
  text-align: center;
`;
type Item = [string, string, number?];
const RIBBON: Item[][] = [
  [['copies', '批量自\n动出图'], ['sheet', '钣金转\nCAD'], ['rename', '批量改\n名'], ['edit', '批量加\n图号'], ['listBlack', '批量改\n属性'], ['listColor', '属性卡']],
  [['bom', 'BOM工\n具'], ['tableOut', '导出部\n件清单'], ['pdf', '三维格\n式转换'], ['pdf', '图纸转\nPDFCAD', 52], ['layers', '图层上\n色'], ['crayons', '随机上\n色']],
  [['replace', '批量替\n换模板'], ['lines', '技术要\n求管理'], ['triangle', '公差查\n询标注'], ['printer', '批量打\n印']],
  [['gearBlack', '齿轮设\n计'], ['chain', '链轮设\n计'], ['spring', '弹簧设\n计']],
  [['bolt', '国标件\n库'], ['fixture', '组合夹\n具库'], ['machine', '机床夹\n具库'], ['mold', '模架库'], ['flange', '法兰库'], ['tap', '石化管\n件库'], ['tower', '焊件功\n能']],
  [['one', '自定义\n功能'], ['person', '上次使\n用的']],
  [['gPlus', '更多功\n能'], ['gKey', '激活', 36], ['gSet', '设置', 36], ['gInfo', '关于', 36]],
];

/* ---------- workspace ---------- */

const Workspace = styled.main`
  flex: 1;
  min-height: 0;
  position: relative;
  display: flex;
  flex-direction: column;
  background: linear-gradient(200deg, #dfdfdf 0%, #e3e3e3 30%, #e8e8e8 60%, #e9e9e9 80%, #e6e6e6 100%);
`;
const TabRow = styled.div`
  display: flex;
  flex: none;
`;
const Tab = styled(PlainButton)<{ $w: number; $on?: boolean }>`
  width: ${p => p.$w}px;
  height: 22px;
  font-size: 13px;
  line-height: 20px;
  white-space: pre;
  align-items: baseline;
  color: ${p => (p.$on ? '#3a3a3a' : '#222')};
  background: ${p => (p.$on ? PANEL : '#d3d3d3')};
  border-right: 1px solid ${GRAY};
  border-bottom: 1px solid ${GRAY};
`;
const TABS: [string, number][] = [['装配体', 56], ['布局', 56], ['草图', 56], ['评估', 56], ['SOLIDWORKS 插件', 117], ['协同管理', 68], ['KYTool', 56]];

const HeadsUp = styled.div`
  position: absolute;
  top: 5px;
  left: 196px;
  right: 0;
  display: flex;
  justify-content: center;
  gap: 6px;
`;
const SplitButton = styled.div`
  display: flex;
  margin-right: -5px;
`;
const HUD: [string, string, boolean][] = [
  ['zoomFit', '整屏显示全图', false], ['zoomArea', '局部放大', false], ['prevView', '上一视图', false], ['section', '剖面视图', false],
  ['cubeView', '视图定向', true], ['cube', '显示样式', true], ['eye', '隐藏/显示', true], ['ballPencil', '编辑外观', false], ['scene', '应用布景', true], ['monitor', '视图设置', true],
];
const DocButtons = styled.div`
  position: absolute;
  top: 5px;
  right: 7px;
  display: flex;
`;
const TaskPane = styled.div`
  position: absolute;
  top: 75px;
  right: 0;
  border: 1px solid ${GRAY};
  border-right: 0;
`;
const TaskButton = styled(PlainButton)<{ $on?: boolean }>`
  width: 25px;
  height: 24px;
  background: ${p => (p.$on ? '#fff' : '#d6d6d6')};
  &:not(:last-child) { border-bottom: 1px solid ${GRAY}; }
`;
const Body = styled.div`
  flex: 1;
  min-height: 0;
  display: flex;
`;
const Sidebar = styled.aside`
  flex: none;
  width: 202px;
  display: flex;
  background: ${PANEL};
  border-right: 1px solid ${GRAY};
`;
const NoteColumn = styled.div`
  width: 32px;
  display: flex;
  flex-direction: column;
  align-items: center;
  gap: 6px;
  padding: 2px 2px 0 0;
`;
const NoteTools = styled.div`
  width: 30px;
  display: flex;
  flex-direction: column;
  align-items: center;
  gap: 6px;
  padding: 5px 0 10px;
  border-bottom: 1px solid ${GRAY};
`;
const Manager = styled.section`
  flex: 1;
  min-width: 0;
  display: flex;
  flex-direction: column;
  border-left: 1px solid #bdbdbd;
  padding-right: 2px;
`;
const Handle = styled.div`
  height: 16px;
  margin: 4px 0;
  display: flex;
  align-items: center;
  justify-content: center;
  border-top: 1px solid #bdbdbd;
  border-bottom: 1px solid #bdbdbd;
`;
const Dot = styled.i`
  width: 6px;
  height: 6px;
  border: 1px solid #8a8a8a;
  border-radius: 50%;
  background: #ccc;
`;
const ManagerTabs = styled.div`
  display: flex;
  height: 26px;
  padding-left: 1px;
`;
const ManagerTab = styled(PlainButton)<{ $on?: boolean }>`
  width: 40px;
  background: ${p => (p.$on ? PANEL : '#cfcfcf')};
  border: solid ${GRAY};
  border-width: 1px 1px ${p => (p.$on ? 0 : 1)}px 0;
`;
const TabScroll = styled.div`
  display: flex;
  flex: 1;
  align-items: flex-end;
  padding-left: 7px;
  background: #cfcfcf;
  border-top: 1px solid ${GRAY};
`;
const ScrollButton = styled(PlainButton)`
  flex: 1;
  height: 20px;
  background: #fbfbfb;
  border: 1px solid #b0b0b0;
`;
const SideCaret = styled.i<{ $dir: 'left' | 'right'; $c?: string }>`
  border: 4px solid transparent;
  border-${p => (p.$dir === 'left' ? 'right' : 'left')}: 4px solid ${p => p.$c ?? '#000'};
  border-${p => p.$dir}-width: 0;
`;
const FilterBox = styled.label`
  flex: none;
  height: 26px;
  margin: 1px 3px 0 4px;
  display: flex;
  align-items: center;
  gap: 1px;
  padding: 0 2px;
  border: 1px solid #bdbdbd;
`;
const FilterInput = styled.input`
  flex: 1;
  min-width: 0;
  border: 0;
  background: none;
  outline: none;
`;
const TreeArea = styled.div`
  flex: 1;
  min-height: 0;
  display: flex;
`;
const Tree = styled.ul`
  flex: 1;
  min-width: 0;
  overflow: hidden;
`;
const TreeRow = styled.li<{ $level: number }>`
  height: 22px;
  display: flex;
  align-items: center;
  padding-left: ${p => [4, 5, 28][p.$level]}px;
  gap: ${p => (p.$level ? 5 : 1)}px;
  white-space: pre;
`;
const TreeToggle = styled(PlainButton)`
  flex: none;
  width: 10px;
  height: 16px;
  margin-right: 6px;
`;
const RootIcon = styled.span`
  margin-right: 4px;
`;
const VScroll = styled.div`
  width: 15px;
  display: flex;
  flex-direction: column;
  align-items: center;
  justify-content: space-between;
  background: #f0f0f0;
`;
const VThumb = styled.i`
  flex: 0 0 49%;
  width: 15px;
  margin-bottom: auto;
  background: #cdcdcd;
`;
const HScroll = styled.div`
  flex: none;
  height: 16px;
  margin: 1px 0 5px;
  padding-right: 16px;
  display: flex;
  align-items: center;
  background: #f0f0f0;
`;
const HThumb = styled.i`
  width: 41px;
  height: 15px;
  margin-right: auto;
  background: #cdcdcd;
`;
const CanvasArea = styled.div`
  flex: 1;
  min-width: 0;
  position: relative;
`;
const ModelSvg = styled.svg`
  display: block;
  width: 100%;
  height: 100%;
`;
const SideHandle = styled.div`
  position: absolute;
  left: -1px;
  top: 378px;
  width: 9px;
  height: 40px;
  display: flex;
  align-items: center;
  justify-content: center;
  background: ${PANEL};
  border: 1px solid ${GRAY};
  border-left: 0;
`;
const Watermark = styled.div`
  position: absolute;
  right: 82px;
  bottom: 6px;
  color: #b4b4b4;
  font-size: 15px;
  line-height: 22px;
`;
const WatermarkTitle = styled.div`
  font-size: 21px;
  line-height: 26px;
`;
const Badge = styled.div`
  position: absolute;
  right: -8px;
  bottom: 9px;
  width: 50px;
  height: 50px;
  border: 2px solid #2a8af5;
  border-radius: 50%;
  overflow: hidden;
  z-index: 2;
`;

const ROWS: [number, string, string, ('r' | 'd')?][] = [
  [1, 'fHistory', 'History', 'r'], [1, 'fSensor', '传感器'], [1, 'fNote', '注解', 'r'], [1, 'fMarkup', 'Markups', 'r'], [1, 'fSigma', '方程式'],
  [1, 'plane', '前视基准面'], [1, 'plane', '上视基准面'], [1, 'plane', '右视基准面'], [1, 'origin', '原点'], [1, 'part', '(固定) PN-20-002-', 'd'],
  [2, 'fClip', 'PN-20-002-防', 'r'], [2, 'fHistory', 'History', 'r'], [2, 'fSensor', '传感器'], [2, 'fNote', '注解', 'r'], [2, 'fMarkup', 'Markups', 'r'],
  [2, 'fBody', '实体(1)', 'r'], [2, 'fSigma', '方程式'], [2, 'material', '6063-T5'], [2, 'plane', '前视基准面'], [2, 'plane', '上视基准面'], [2, 'plane', '右视基准面'],
  [2, 'origin', '原点'], [2, 'extrude', '凸台-拉伸1{ ->', 'r'], [2, 'extrude', '凸台-拉伸2', 'r'], [2, 'fillet', '圆角1'], [2, 'extrude', '凸台-拉伸3', 'r'],
  [2, 'hole', 'M3 螺纹孔1', 'r'], [2, 'hole', 'M3 螺纹孔2', 'r'], [2, 'cut', '切除-拉伸4', 'r'], [2, 'cut', '切除-拉伸5', 'r'], [2, 'fillet', '圆角4'], [2, 'extrude', '凸台-拉伸4', 'r'],
];
const NOTES: [string, string][] = [
  ['nNew', '新建注解视图'], ['nEdit', '编辑注解'], ['nInsert', '插入注解'], ['nAdd', '添加注解'],
  ['nLight', '注解状态'], ['nSave', '保存注解'], ['nAll', '全部注解'], ['nBelt', '皮带'],
];

function FeatureManager() {
  return (
    <Sidebar>
      <NoteColumn>
        <Grip $row />
        <NoteTools>
          {NOTES.map(([n, label]) => (
            <IconButton key={n} aria-label={label}><Icon name={n} /></IconButton>
          ))}
        </NoteTools>
      </NoteColumn>
      <Manager>
        <Handle><Dot /></Handle>
        <ManagerTabs>
          <ManagerTab $on aria-label="设计树"><Icon name="assembly" /></ManagerTab>
          <ManagerTab aria-label="属性"><Icon name="props" /></ManagerTab>
          <ManagerTab aria-label="配置"><Icon name="config" /></ManagerTab>
          <TabScroll>
            <ScrollButton aria-label="向左"><SideCaret $dir="left" /></ScrollButton>
            <ScrollButton aria-label="向右"><SideCaret $dir="right" /></ScrollButton>
          </TabScroll>
        </ManagerTabs>
        <FilterBox>
          <Icon name="filter" size={18} />
          <Caret />
          <FilterInput aria-label="过滤" />
        </FilterBox>
        <TreeArea>
          <Tree>
            <TreeRow $level={0}>
              <RootIcon><Icon name="assembly" size={18} /></RootIcon>
              <Icon name="note" size={18} />
              <span><Mixed text="PN-20-002-防水塑" size={13} /></span>
            </TreeRow>
            {ROWS.map(([level, icon, text, open], i) => (
              <TreeRow key={i} $level={level}>
                <TreeToggle aria-label={text} disabled={!open}>
                  {open === 'r' && <SideCaret $dir="right" $c="#555" />}
                  {open === 'd' && <Caret />}
                </TreeToggle>
                <Icon name={icon} size={18} />
                {text.includes('PN-') ? <span><Mixed text={text} size={13} /></span> : text}
              </TreeRow>
            ))}
          </Tree>
          <VScroll>
            <Svg width="15" height="17" viewBox="0 0 15 17"><path d="M4 11l3.500-4 3.500 4" fill="none" stroke="#444" strokeWidth="1.800" /></Svg>
            <VThumb />
            <Svg width="15" height="17" viewBox="0 0 15 17"><path d="M4 7l3.500 4L11 7" fill="none" stroke="#444" strokeWidth="1.800" /></Svg>
          </VScroll>
        </TreeArea>
        <HScroll>
          <Svg width="17" height="16" viewBox="0 0 17 16"><path d="M10 4.500L6 8l4 3.500" fill="none" stroke="#444" strokeWidth="1.800" /></Svg>
          <HThumb />
          <Svg width="16" height="16" viewBox="0 0 16 16"><path d="M6 4.500L10 8l-4 3.500" fill="none" stroke="#444" strokeWidth="1.800" /></Svg>
        </HScroll>
      </Manager>
    </Sidebar>
  );
}

/* ---------- 3D model ---------- */

type Seg = [number, number, number, number];
const Lines = ({ s, c = '#000', w = 1 }: { s: Seg[]; c?: string; w?: number }) => (
  <path d={s.map(([a, b, d, e]) => `M${a} ${b}L${d} ${e}`).join('')} stroke={c} strokeWidth={w} fill="none" />
);
/* interpolates parallel edges between two bounding segments */
const between = (a: Seg, b: Seg, ts: number[]): Seg[] =>
  ts.map(t => a.map((v, i) => v + (b[i] - v) * t) as Seg);

function Boss({ x, y, r = 15, dx = 2, dy = 13, c = '#222', fill = 'rgba(150,150,165,.3)' }: { x: number; y: number; r?: number; dx?: number; dy?: number; c?: string; fill?: string }) {
  return (
    <g fill="none" stroke={c} strokeWidth="1.200">
      <path d={`M${x - r + 3} ${y + 3}L${x + dx - r + 3} ${y + dy}M${x + r - 2} ${y + 3}L${x + dx + r - 3} ${y + dy}`} />
      <ellipse cx={x + dx} cy={y + dy} rx={r - 2} ry={r - 4} fill={fill} strokeWidth="1.600" />
      <ellipse cx={x + dx} cy={y + dy} rx={r - 5} ry={r - 7} />
      <ellipse cx={x + dx} cy={y + dy - 1} rx="5.500" ry="4.500" strokeWidth="1.600" />
      <ellipse cx={x + dx} cy={y + dy - 1} rx="2.500" ry="2" />
      <ellipse cx={x} cy={y} rx={r} ry={r - 2} fill={fill} strokeWidth="1.600" />
      <ellipse cx={x} cy={y + 1} rx={r - 3} ry={r - 5} />
      <ellipse cx={x} cy={y} rx="4" ry="3" strokeWidth="1.600" />
      <path d={`M${x - 4} ${y}v9M${x + 4} ${y}v9`} />
    </g>
  );
}
function ScrewHead({ x, y, r = 12 }: { x: number; y: number; r?: number }) {
  return (
    <g fill="none" stroke="#333" strokeWidth="1.400">
      <path d={`M${x - r + 1} ${y + 4}v8q4 4 8 1v-6M${x + r - 1} ${y + 4}v6q-3 3-6 1v-5`} stroke="#777" />
      <ellipse cx={x} cy={y} rx={r} ry={r - 3} fill="rgba(255,255,255,.5)" />
      <ellipse cx={x} cy={y} rx="6" ry="4.500" fill="#c4c2cc" />
      <ellipse cx={x} cy={y - 1} rx="3.500" ry="2.800" />
    </g>
  );
}
function FrontFoot({ x, y }: { x: number; y: number }) {
  return (
    <g transform={`translate(${x} ${y})`} strokeLinejoin="round">
      <path d="M0 0V13L8 26q8 14 27 16 10 0 19-5l28-15q14-8 13-22v-6L84-20z" fill="#676579" stroke="#000" strokeWidth="1.200" />
      <path d="M3 14L6 26q10 12 29 12 9 0 19-6l26-14q15-8 15-20 0-10-8-17L7 19z" fill="#fff" stroke="#000" strokeWidth="1.200" />
      <path d="M0 0L81-43l5 8 2 18L6 25 1 13z" fill="#fff" stroke="#000" strokeWidth="1.200" />
      <path d="M3 8L85-33l1 6L4 14z" fill="#676579" />
      <Lines s={between([3, 8, 86, -35], [6, 24, 88, -17], [0, 0.2, 0.36, 0.5, 0.62, 0.8, 1])} w={1.3} />
      <path d="M54 32v6M80 18v6" stroke="#000" />
      <g transform="rotate(45 58 13)">
        <rect x="49" y="8" width="18" height="11" rx="5.500" fill="#676579" stroke="#000" strokeWidth="1.300" />
        <rect x="52" y="9" width="14" height="8" rx="4" fill="#e4e4e8" stroke="#000" strokeWidth=".8" />
      </g>
    </g>
  );
}

const FloorHole = ({ x, y }: { x: number; y: number }) => (
  <g stroke={GRAY} strokeWidth="1.300">
    <ellipse cx={x} cy={y} rx="9" ry="7" fill="#fff" />
    <ellipse cx={x} cy={y + 3} rx="5.500" ry="4" fill="#a9ab74" />
  </g>
);

function Model() {
  const lidLeft: Seg = [549, 482, 724, 755];
  const lidLeftIn: Seg = [574, 470, 738, 738];
  const lidFront: Seg = [769, 766, 1281, 509];
  const lidFrontIn: Seg = [762, 741, 1268, 489];
  return (
    <ModelSvg viewBox="210 176 1702 817" role="img" aria-label="防水塑料盖三维模型">
      {/* rear-left foot */}
      <g stroke="#000" strokeWidth="1.200" strokeLinejoin="round">
        <path d="M641 708q-26 8-23 33l19 32q16 12 40 8l16-7-14-30z" fill="#676579" />
        <path d="M641 708q-26 8-23 29l19 30q14 12 43 2l-5-20z" fill="#fff" />
        <path d="M639 692l8-3 39 62-4 18-8-2-34-60z" fill="#fff" />
        <path d="M679 764l7-13 7 18-12 3z" fill="#676579" />
        <Lines s={between([641, 694, 681, 765], [641, 706, 676, 767], [0, 0.3, 0.6, 1])} w={1.4} />
        <rect x="634" y="742" width="20" height="9" rx="4.500" fill="#676579" transform="rotate(-20 644 747)" />
      </g>
      {/* base plate */}
      <path d="M584 595L588 607 759 868Q764 880 785 880 793 880 800 876L1285 624Q1298 616 1298 606V596L1284 612 796 863 760 862z" fill="#646b0c" stroke="#000" strokeWidth="1.300" />
      <path d="M798 864l1 12M1284 612v12" stroke="#000" />
      {/* body walls */}
      <path d="M550 484L563 528 584 595 758 862 730 765z" fill="#5d616c" stroke="#000" strokeWidth="1.400" />
      <path d="M726 758L757 860q8 8 40 3L770 766z" fill="#5c5e6b" stroke="#000" />
      <Lines s={between([729, 762, 759, 862], [768, 768, 794, 866], [0.06, 0.12, 0.18, 0.3, 0.36, 0.42, 0.54, 0.6, 0.66, 0.78, 0.84, 0.9])} w={1.7} />
      <path d="M770 766L1281 509 1284 612 796 863z" fill="#676579" stroke="#000" strokeWidth="1.300" />
      <path d="M1281 509L1295 495 1298 600 1284 612z" fill="#55536a" stroke="#000" />
      <Lines s={between([1281, 509, 1285, 611], [1295, 496, 1298, 600], [0.25, 0.42, 0.6, 0.78])} w={1.6} />

      {/* lid */}
      <path d="M548 482Q542 462 565 449L1038 225Q1062 216 1078 233L1285 458Q1296 470 1295 490 1294 502 1281 509L769 766Q744 774 727 760z" fill="#e3e2e7" stroke="#000" strokeWidth="2" />
      <path d="M568 452L1038 229Q1060 223 1074 236L1048 250 594 458z" fill="#d2d1d7" />
      <path d="M554 482Q560 463 590 457L1045 245 1066 240 1276 470 1288 482 1280 498 769 752Q748 758 735 746z" fill="#fff" />

      {/* interior */}
      <path d="M590 458L1044 246 1060 260 1064 347 612 559 577 497z" fill="#aba9b5" />
      <path d="M577 470L596 460 604 470 600 500 582 505z" fill="#b6b4bf" />
      <path d="M1068 250L1080 256 1262 452 1280 478 1258 497 1213 506 1084 352z" fill="#a3a7ab" />
      <path d="M1078 240L1282 464 1274 470 1074 250z" fill="#d9d8de" />
      <path d="M1078 246L1279 468" stroke="#fff" strokeWidth="4" />
      <path d="M623 577L687 537 1000 390 1054 368 1084 364 1212 505 1235 485 1232 490 760 718 745 722z" fill="#fff" />
      {/* base seal ring */}
      <g stroke={GRAY} strokeWidth="1">
        <path d="M612 559L1058 347 1060 361 1006 391 930 421 687 537 623 571z" fill="#a9ab74" />
        <path d="M612 561L1058 349" stroke="#ffff7e" strokeWidth="3" />
        <path d="M612 559L1058 347M613 563L1058 351" fill="none" />
        <path d="M614 571L673 544 684 536 682 546 675 553 622 578zM1000 389L1052 366 1054 371 1008 392z" fill="#ffff7e" />
        <path d="M617 575L674 549" />
        <path d="M1052 352q6 12 18 10 12-2 14-12l6 4-4 12-14 4-16-2z" fill="#ffff7e" />
        <path d="M1083 350L1219 500 1213 513 1085 366z" fill="#a2a66c" />
        <path d="M1084 352L1218 499" stroke="#ffff7e" strokeWidth="3" />
        <path d="M1082 352L1215 501M1087 351L1221 497" />
        <path d="M1085 364L1212 512" stroke="#ffff7e" strokeWidth="2" />
        <path d="M1085 367L1211 514" />
        <path d="M725 513l8-4v5l-8 3zM832 462l9-4v5l-9 4zM937 411l9-4v5l-9 4zM988 388l9-5v5l-9 5zM672 540l8-5v8l-8 4zM1158 450l7 4-2 4zM1174 468l7 4-2 4zM1190 486l7 4-2 4z" fill="#ffff7e" stroke="#6a6a40" />
      </g>
      {/* corner column */}
      <path d="M1046 256L1082 262 1086 350 1074 362 1060 360 1055 345z" fill="#9f9da9" />
      <Lines s={between([1047, 258, 1057, 348], [1078, 262, 1086, 350], [0, 0.15, 0.3, 0.4, 0.55, 0.7, 1])} c="#747480" w={1.1} />
      <FloorHole x={852} y={477} />
      <FloorHole x={1072} y={371} />

      {/* back-left rim edges */}
      <Lines s={[[570, 460, 598, 447], [618, 438, 807, 348], [818, 343, 1002, 258], [1010, 253, 1044, 237]]} c="#444" w={3.4} />
      <Lines s={[[600, 465, 1046, 256], [602, 461, 1046, 252], [604, 469, 1046, 261]]} c="#55545e" w={1.1} />
      <path d="M747 707L590 470Q583 461 598 454L1035 247Q1052 242 1064 254L1250 460" fill="none" stroke="#000" strokeWidth="2" />
      <path d="M552 482Q553 466 570 458L598 447M1044 237Q1062 232 1076 244L1278 464Q1290 476 1286 490" fill="none" stroke="#222" strokeWidth="1.500" />
      <path d="M560 486Q560 474 574 466L600 456M571 478Q574 468 586 463" fill="none" stroke="#444" strokeWidth="1.300" />
      <path d="M1038 225v14M1078 233v14M565 449v12" stroke="#555" />
      {/* right rim edges */}
      <Lines s={[[1075, 250, 1272, 468]]} c="#444" w={3} />
      <Lines s={[[1072, 252, 1258, 457], [1080, 262, 1244, 450], [1078, 268, 1236, 455], [1066, 262, 1240, 462], [1079, 254, 1266, 462]]} c="#55555c" w={1.2} />

      {/* front and left rims */}
      <path d="M768 752L1284 494 1290 498 1281 509 769 766Q744 774 727 760L724 745Q745 760 768 752z" fill="#d9d8de" />
      <Lines s={between(lidLeft, lidLeftIn, [0.05, 0.16, 0.26, 0.42, 0.52, 0.7, 0.8, 0.9, 1])} w={1.3} />
      <Lines s={[[561, 500, 724, 752], [590, 530, 700, 705]]} w={2.2} />
      <Lines s={[[566, 484, 592, 524], [574, 488, 600, 530], [582, 505, 610, 552], [588, 508, 598, 530]]} c="#555" w={1} />
      <Lines s={between(lidFront, lidFrontIn, [0.3, 0.4, 0.5, 0.7, 0.88, 1])} w={1.2} />
      <Lines s={[lidFront]} w={2.4} />
      <Lines s={between([808, 738, 1240, 525], [808, 742, 1240, 529], [0, 1])} c="#333" w={1.2} />
      <path d="M763 712L1193 501 1250 474Q1256 471 1250 460" fill="none" stroke="#000" strokeWidth="2.200" />
      <path d="M747 707Q754 715 763 712M764 717L1252 480 1270 472" fill="none" stroke="#000" strokeWidth="1.300" />
      <path d="M724 742Q735 768 769 752M728 735Q742 756 766 743M732 738Q745 750 762 741" fill="none" stroke="#000" strokeWidth="1.200" />
      <path d="M1268 489Q1282 482 1278 468M1272 493Q1290 486 1286 468M1284 500Q1294 490 1293 476M1242 516l32-15v8l-32 14z" fill="none" stroke="#222" strokeWidth="1.300" />
      <path d="M1243 516l31-15v6l-31 15z" fill="#4c4a5c" />

      {/* bosses and screws */}
      <Boss x={829} y={363} c="#444" />
      <path d="M812 350l22 20M818 346l14 18M826 350l8 18" stroke="#333" />
      <ScrewHead x={615} y={457} />
      <path d="M602 450l10-8 10 2 4 8M610 446l8 6" fill="none" stroke="#333" strokeWidth="1.400" />
      <Boss x={592} y={474} r={14} c="#333" dx={3} />
      <path d="M563 476l18 4M567 486l16-4M572 494l14-6" stroke="#333" strokeWidth="1.400" />
      <ScrewHead x={1015} y={269} />
      <path d="M1004 260l12-8 12 2v6M1010 256l14 6" fill="none" stroke="#333" strokeWidth="1.500" />
      <Boss x={1057} y={256} r={13} dy={14} c="#333" />
      <path d="M1068 256l14-4v6l-14 6M1070 250l12 4" fill="none" stroke="#222" strokeWidth="1.500" />
      <Boss x={1242} y={464} r={14} dy={12} c="#000" />
      <path d="M1250 458l10-5v8l-10 6zM1258 466l8-6 4 6-12 6z" fill="#444" stroke="#000" />
      <Boss x={1228} y={502} r={16} dx={0} dy={8} c="#000" />
      <Boss x={1001} y={585} r={16} c="#000" />
      <path d="M1004 598l14 24M1010 592l15 27M1014 588l15 28M1018 622l12-5" stroke="#000" strokeWidth="1.800" fill="none" />
      <Boss x={747} y={712} r={16} dx={3} dy={11} c="#000" />
      <path d="M722 722l12-7M724 730l14-8M722 722l4 12 12-6" stroke="#000" strokeWidth="1.800" fill="none" />
      <Boss x={798} y={716} r={16} dx={2} dy={10} c="#000" />
      <path d="M784 722l8 20M788 722l8 18M814 716l2 16M818 714l-2 18" stroke="#000" strokeWidth="2" />

      <FrontFoot x={863} y={830} />
      <FrontFoot x={1146} y={684} />

      {/* orientation triad */}
      <g strokeWidth="4" strokeLinecap="round">
        <path d="M250 935L268 926" stroke="#d01818" /><path d="M264 922l14-1-9 8z" fill="#b01414" />
        <path d="M250 935L248 922" stroke="#0a6a14" /><path d="M243 925l4-10 5 9z" fill="#0a6a14" />
        <path d="M250 935L260 947" stroke="#1818c0" /><path d="M256 948l8-4 2 10z" fill="#1414b0" />
      </g>
      <g fontFamily="Liberation Serif, serif" fontSize="10">
        <text x="242" y="915" fill="#0a8a14">Y</text>
        <text x="274" y="923" fill="#e01010">X</text>
        <text x="261" y="961" fill="#1010e0">Z</text>
      </g>
    </ModelSvg>
  );
}

/* ---------- bottom bars ---------- */

const ModelBar = styled.div`
  flex: none;
  height: 16px;
  display: flex;
  padding-left: 32px;
  background: ${PANEL};
  border-top: 1px solid ${GRAY};
  border-bottom: 1px solid ${GRAY};
`;
const NavButtons = styled.div`
  display: flex;
  margin-left: 27px;
  border-left: 1px solid ${GRAY};
`;
const NavButton = styled(PlainButton)`
  width: 16px;
  background: #b4b4b4;
  border-right: 1px solid ${GRAY};
`;
const SheetTab = styled(PlainButton)<{ $w: number; $on?: boolean }>`
  width: ${p => p.$w}px;
  font-size: 13px;
  line-height: 14px;
  white-space: pre;
  background: ${p => (p.$on ? PANEL : '#d3d3d3')};
  border-right: 1px solid ${GRAY};
`;
const StatusBar = styled.footer`
  flex: none;
  height: 19px;
  display: flex;
  align-items: center;
  padding: 2px 4px 0 1px;
  background: ${PANEL};
`;
const Spacer = styled.i`
  flex: 1;
`;
const StatusCell = styled.span<{ $w: number }>`
  width: ${p => p.$w}px;
  height: 16px;
  border-right: 1px solid #c8c8c8;
`;
const StatusText = styled(PlainButton)`
  line-height: 16px;
  gap: 16px;
  margin: 0 68px 0 30px;
`;
const SizeGrip = styled.i`
  width: 10px;
  height: 10px;
  margin-left: 8px;
  background: radial-gradient(circle, #aaa 1px, transparent 1px) 0 0 / 4px 4px;
`;

const NAV = ['M4 2v8M10 2L5 6l5 4z', 'M9 2L4 6l5 4z', 'M4 2l5 4-5 4z', 'M3 2l5 4-5 4zM9 2v8'];
const DOC: [string, string][] = [['dockL', '左停靠'], ['dockR', '右停靠'], ['minG', '最小化文档'], ['restoreG', '还原文档'], ['closeG', '关闭文档']];
const TASKS: [string, string][] = [['house', '资源'], ['books', '设计库'], ['openFolder', '文件探索器'], ['palette', '视图调色板'], ['colorBall', '外观'], ['props', '自定义属性']];

export default function App() {
  return (
    <Desktop>
      <GlobalStyle />
      <AppWindow>
        <Header />
        <ToolStrip>
          <RenderTools>
            <Grip />
            {RENDER.map(([n, label]) => <IconButton key={n} aria-label={label}><Icon name={n} /></IconButton>)}
          </RenderTools>
        </ToolStrip>
        <Ribbon>
          {RIBBON.map((g, i) => (
            <RibbonGroup key={i}>
              {g.map(([icon, label, w]) => (
                <RibbonItem key={label} $w={w ?? 49}>
                  <Icon name={icon} size={17} />
                  <RibbonLabel><Mixed text={label} /></RibbonLabel>
                </RibbonItem>
              ))}
            </RibbonGroup>
          ))}
        </Ribbon>
        <Workspace>
          <TabRow>
            {TABS.map(([t, w]) => (
              <Tab key={t} $w={w} $on={t === 'KYTool'}><span><Mixed text={t} /></span></Tab>
            ))}
          </TabRow>
          <Body>
            <FeatureManager />
            <CanvasArea>
              <Model />
              <SideHandle><Dot /></SideHandle>
              <Watermark>
                <WatermarkTitle>激活 Windows</WatermarkTitle>
                转到“设置”以激活 Windows。
              </Watermark>
              <Badge>
                <svg width="46" height="46" viewBox="0 0 46 46" role="img" aria-label="TGP">
                  <rect width="46" height="46" fill="#9fdcf0" />
                  <path d="M0 34q6-6 12-2 8-2 10 6l24 4v6H0z" fill="#fff" />
                  <path d="M0 20l4 4v8H0z" fill="#3aa05a" />
                  <text x="14" y="8" fontFamily="Liberation Serif, serif" fontWeight="700" fontSize="10" fill="#222">TGP</text>
                  <path d="M20 22q-6-2-10 4l8 2zM26 30q4 4 0 10l-5-8z" fill="#1c4068" />
                  <path d="M18 32q2-16 24-22-2 20-20 24z" fill="#fff" stroke="#456" />
                  <path d="M34 13l9-4q0 6-3 10z" fill="#e04a28" />
                  <circle cx="31" cy="19" r="3" fill="#444" stroke="#222" />
                  <path d="M19 30l-5 7 8-4z" fill="#f5a020" />
                  <path d="M26 42h12" stroke="#d03030" strokeWidth="4" strokeDasharray="3 1" />
                </svg>
              </Badge>
            </CanvasArea>
          </Body>
          <HeadsUp>
            {HUD.map(([n, label, split]) =>
              split ? (
                <SplitButton key={n}>
                  <IconButton aria-label={label}><Icon name={n} /></IconButton>
                  <IconButton $w={19} aria-label={`${label}选项`}><Caret $c="#8a8a8a" /></IconButton>
                </SplitButton>
              ) : (
                <IconButton key={n} aria-label={label}><Icon name={n} /></IconButton>
              )
            )}
          </HeadsUp>
          <DocButtons>
            {DOC.map(([n, label]) => (
              <IconButton key={n} $w={26} aria-label={label}><Icon name={n} size={18} /></IconButton>
            ))}
          </DocButtons>
          <TaskPane>
            {TASKS.map(([n, label], i) => (
              <TaskButton key={n} $on={i === 0} aria-label={label}><Icon name={n} /></TaskButton>
            ))}
          </TaskPane>
        </Workspace>
        <ModelBar>
          <NavButtons>
            {NAV.map(d => (
              <NavButton key={d} aria-label="翻页">
                <Svg width="12" height="12" viewBox="0 0 12 12"><path d={d} fill="#8c8c8c" stroke="#8c8c8c" /></Svg>
              </NavButton>
            ))}
          </NavButtons>
          <SheetTab $w={48} $on>模型</SheetTab>
          <SheetTab $w={84}><span><Mixed text="运动算例 1" size={12} /></span></SheetTab>
        </ModelBar>
        <StatusBar>
          <Latin $s={12}>SOLIDWORKS Premium 2019 SP3.0</Latin>
          <Spacer />
          欠定义
          <StatusCell $w={7} />
          <StatusCell $w={8} />
          <StatusCell $w={8} />
          <StatusCell $w={16} />
          <StatusText>自定义<Caret $up /></StatusText>
          <Icon name="tag" size={16} />
          <SizeGrip />
        </StatusBar>
      </AppWindow>
    </Desktop>
  );
}
